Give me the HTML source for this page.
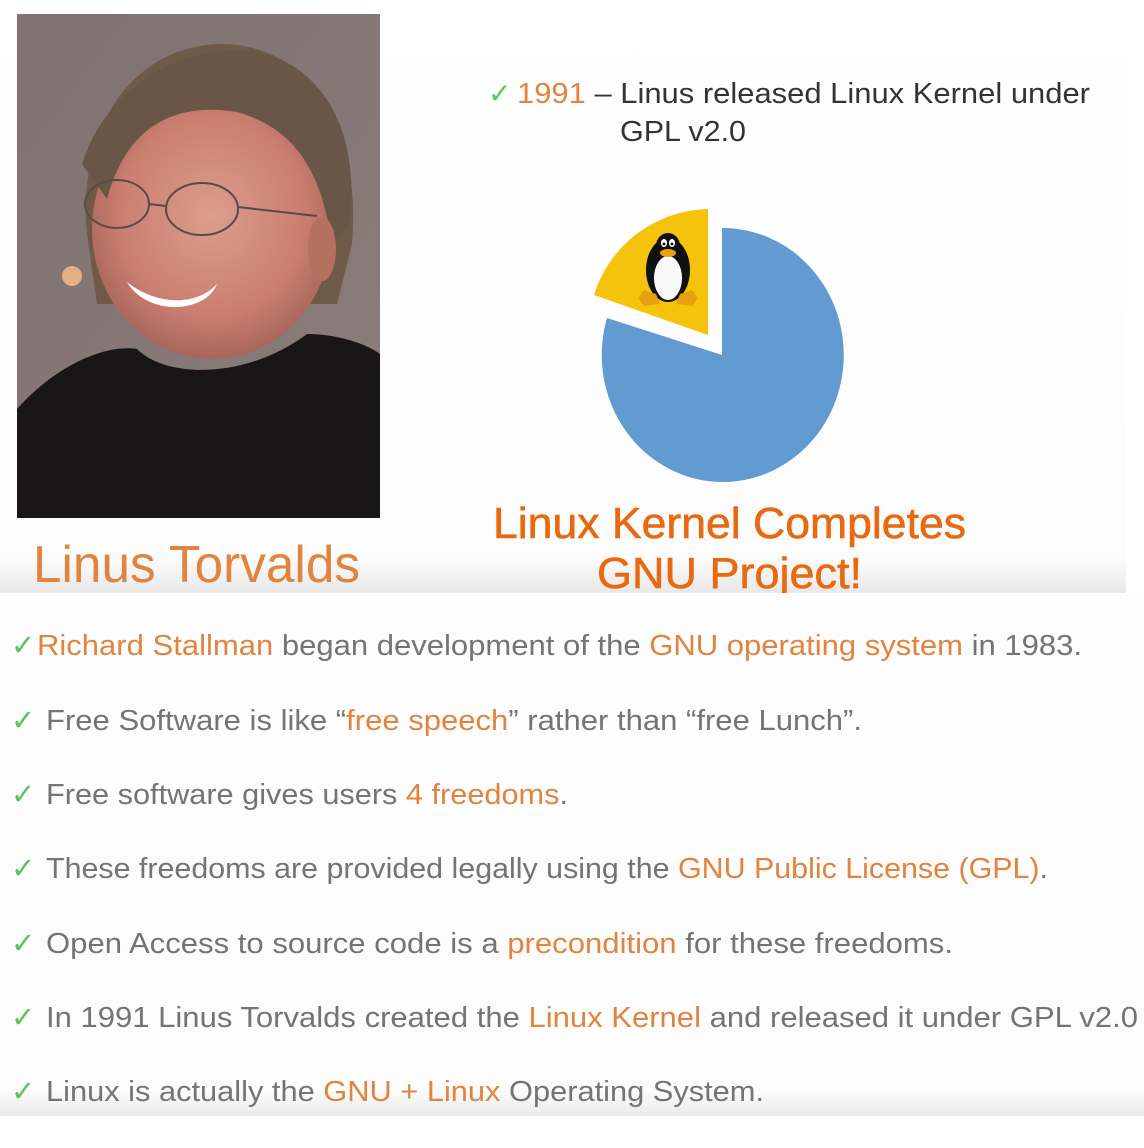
<!DOCTYPE html>
<html><head><meta charset="utf-8"><style>
html,body{margin:0;padding:0;background:#fff;width:1144px;height:1148px;overflow:hidden}
svg{display:block}
text{font-family:"Liberation Sans",sans-serif}
</style></head><body>
<svg width="1144" height="1148" viewBox="0 0 1144 1148" xmlns="http://www.w3.org/2000/svg">
<defs>
<linearGradient id="topbg" x1="0" y1="0" x2="0" y2="1">
<stop offset="0" stop-color="#fff"/><stop offset="0.94" stop-color="#fcfcfc"/><stop offset="1" stop-color="#e8e8e8"/>
</linearGradient>
<linearGradient id="botbg" x1="0" y1="0" x2="0" y2="1">
<stop offset="0" stop-color="#fdfdfd"/><stop offset="0.95" stop-color="#fcfcfc"/><stop offset="1" stop-color="#ebebeb"/>
</linearGradient>
<radialGradient id="face" cx="0.5" cy="0.45" r="0.55">
<stop offset="0" stop-color="#dc9d8d"/><stop offset="0.7" stop-color="#c97e70"/><stop offset="1" stop-color="#a8665a"/>
</radialGradient>
<linearGradient id="wall" x1="0" y1="0" x2="1" y2="1">
<stop offset="0" stop-color="#7f7270"/><stop offset="1" stop-color="#8a7d7a"/>
</linearGradient>
</defs>
<rect x="0" y="0" width="1126" height="593" fill="url(#topbg)"/>
<rect x="0" y="593" width="1144" height="523" fill="url(#botbg)"/>

<!-- Photo -->
<svg x="17" y="14" width="363" height="504" viewBox="0 0 363 504">
<rect width="363" height="504" fill="url(#wall)"/>
<path d="M70,220 C60,120 110,35 200,30 C290,28 345,110 335,230 L320,290 L80,290 Z" fill="#6f5a48"/>
<ellipse cx="195" cy="215" rx="120" ry="130" fill="url(#face)"/>
<path d="M65,150 C90,70 170,28 240,38 C300,50 345,110 332,210 L315,230 C305,160 280,115 220,98 C160,88 110,110 90,185 Z" fill="#6a5646"/>
<ellipse cx="305" cy="235" rx="14" ry="32" fill="#b5705f"/>
<ellipse cx="100" cy="190" rx="32" ry="24" fill="none" stroke="#5a4a45" stroke-width="2"/>
<ellipse cx="185" cy="195" rx="36" ry="26" fill="none" stroke="#5a4a45" stroke-width="2"/>
<path d="M132,190 L149,192 M221,193 L300,202" stroke="#5a4a45" stroke-width="2"/>
<path d="M110,268 C140,292 180,292 200,270 C188,300 130,302 110,268 Z" fill="#fff"/>
<circle cx="55" cy="262" r="10" fill="#e3b083"/>
<path d="M0,480 L0,395 C40,350 90,330 120,335 C150,365 230,365 290,320 C320,320 350,330 363,340 L363,504 L0,504 Z" fill="#181616"/>
</svg>

<!-- Pie -->
<path d="M722,355 L722,228 A121,127 0 1 1 607,318 Z" fill="#619bd1"/>
<path d="M708,335 L708,209 A122,122 0 0 0 594,295 Z" fill="#f5c30c"/>
<!-- Tux -->
<g transform="translate(668,268)">
<ellipse cx="0" cy="2" rx="22" ry="32" fill="#111"/>
<ellipse cx="0" cy="-22" rx="12" ry="13" fill="#111"/>
<ellipse cx="0" cy="10" rx="14" ry="22" fill="#fafafa"/>
<ellipse cx="-4" cy="-25" rx="3" ry="4" fill="#fff"/><ellipse cx="4" cy="-25" rx="3" ry="4" fill="#fff"/>
<circle cx="-4" cy="-24" r="1.4" fill="#000"/><circle cx="4" cy="-24" r="1.4" fill="#000"/>
<ellipse cx="0" cy="-15" rx="8" ry="4" fill="#e8a20f"/>
<path d="M-24,22 L-12,26 L-8,36 L-24,38 L-30,30 Z" fill="#e8a20f"/>
<path d="M24,22 L12,26 L8,36 L24,38 L30,30 Z" fill="#e8a20f"/>
</g>

<!-- Top text -->
<text x="488" y="103" font-size="28" fill="#5cc45c">✓</text>
<text x="517" y="103" font-size="29" fill="#333" textLength="573" lengthAdjust="spacingAndGlyphs"><tspan fill="#e0843f">1991</tspan> – Linus released Linux Kernel under</text>
<text x="620" y="141" font-size="29" fill="#333" textLength="126" lengthAdjust="spacingAndGlyphs">GPL v2.0</text>

<text x="493" y="538" font-size="44" fill="#e8690f" stroke="#e8690f" stroke-width="0.6" textLength="473" lengthAdjust="spacingAndGlyphs">Linux Kernel Completes</text>
<svg x="0" y="0" width="1144" height="593"><text x="597" y="588" font-size="44" fill="#e8690f" stroke="#e8690f" stroke-width="0.6" textLength="265" lengthAdjust="spacingAndGlyphs">GNU Project!</text></svg>

<text x="33" y="582" font-size="52" fill="#e0843f" textLength="327" lengthAdjust="spacingAndGlyphs">Linus Torvalds</text>

<!-- Bullets -->
<g font-size="29" fill="#747474">
<text x="11" y="655" fill="#5cc45c">✓</text>
<text x="37" y="655" textLength="1045" lengthAdjust="spacingAndGlyphs"><tspan fill="#e0843f">Richard Stallman</tspan> began development of the <tspan fill="#e0843f">GNU operating system</tspan> in 1983.</text>
<text x="11" y="730" fill="#5cc45c">✓</text>
<text x="46" y="730" textLength="816" lengthAdjust="spacingAndGlyphs">Free Software is like “<tspan fill="#e0843f">free speech</tspan>” rather than “free Lunch”.</text>
<text x="11" y="804" fill="#5cc45c">✓</text>
<text x="46" y="804" textLength="522" lengthAdjust="spacingAndGlyphs">Free software gives users <tspan fill="#e0843f">4 freedoms</tspan>.</text>
<text x="11" y="878" fill="#5cc45c">✓</text>
<text x="46" y="878" textLength="1002" lengthAdjust="spacingAndGlyphs">These freedoms are provided legally using the <tspan fill="#e0843f">GNU Public License (GPL)</tspan>.</text>
<text x="11" y="953" fill="#5cc45c">✓</text>
<text x="46" y="953" textLength="907" lengthAdjust="spacingAndGlyphs">Open Access to source code is a <tspan fill="#e0843f">precondition</tspan> for these freedoms.</text>
<text x="11" y="1027" fill="#5cc45c">✓</text>
<text x="46" y="1027" textLength="1092" lengthAdjust="spacingAndGlyphs">In 1991 Linus Torvalds created the <tspan fill="#e0843f">Linux Kernel</tspan> and released it under GPL v2.0</text>
<text x="11" y="1101" fill="#5cc45c">✓</text>
<text x="46" y="1101" textLength="718" lengthAdjust="spacingAndGlyphs">Linux is actually the <tspan fill="#e0843f">GNU + Linux</tspan> Operating System.</text>
</g>
</svg>
</body></html>
